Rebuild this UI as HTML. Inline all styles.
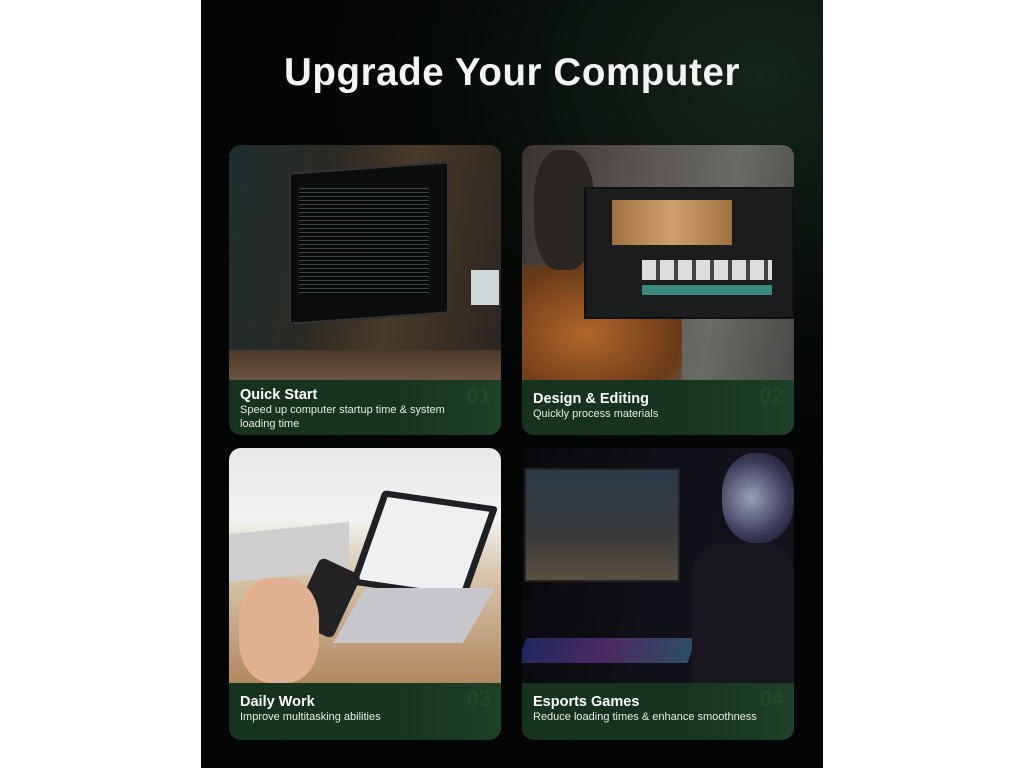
<!DOCTYPE html>
<html><head><meta charset="utf-8"><style>
body{margin:0;width:1024px;height:768px;background:#fff;position:relative;overflow:hidden;font-family:"Liberation Sans",sans-serif}
.panel{position:absolute;left:201px;top:0;width:622px;height:768px;background:radial-gradient(ellipse 500px 400px at 90% 10%,#14251a 0%,#070b08 60%,#030404 100%)}
h1{position:absolute;left:0;width:1024px;top:51px;margin:0;text-align:center;color:#f4f4f4;font-size:38.5px;font-weight:bold;letter-spacing:0.6px}
.card{position:absolute;width:272px;border-radius:12px;overflow:hidden;background:linear-gradient(90deg,#17321f,#163420 60%,#1e4127)}
.img{position:absolute;left:0;top:0;width:100%}
.t{position:absolute;left:11px;color:#fff;font-weight:bold;font-size:14.5px}
.s{position:absolute;left:11px;color:#e8ece8;font-size:11px;line-height:13.5px;width:240px}
.n{position:absolute;right:10px;color:#2a5032;font-size:22px;font-weight:bold;opacity:.55}
.abs{position:absolute}
</style></head><body>
<div class="panel"></div>
<h1>Upgrade Your Computer</h1>

<div class="card" style="left:229px;top:145px;height:290px">
 <div class="img" style="height:235px;background:linear-gradient(100deg,#1e2d2e 0%,#2b2a24 35%,#4a3a28 60%,#2a2420 100%)">
  <div class="abs" style="left:60px;top:22px;width:156px;height:148px;background:#0a0d0c;border:2px solid #333;transform:skewY(-4deg)"></div>
  <div class="abs" style="left:70px;top:40px;width:130px;height:110px;background:repeating-linear-gradient(#0a0d0c 0 3px,#5b6a5c 3px 4px);opacity:.6"></div>
  <div class="abs" style="left:0;top:205px;width:272px;height:30px;background:linear-gradient(#4a3a2a,#6a5440)"></div>
  <div class="abs" style="left:242px;top:125px;width:28px;height:35px;background:#cfd8d8"></div>
 </div>
 <div class="t" style="top:242px">Quick Start</div>
 <div class="s" style="top:259px">Speed up computer startup time &amp; system loading time</div>
 <div class="n" style="top:238px">01</div>
</div>

<div class="card" style="left:522px;top:145px;height:290px">
 <div class="img" style="height:235px;background:linear-gradient(100deg,#3a3430 0%,#5a5550 40%,#6a6a66 70%,#4a4a48 100%)">
  <div class="abs" style="left:0;top:120px;width:160px;height:115px;background:radial-gradient(ellipse at 40% 60%,#b0662a,#6a3a18 70%,transparent 100%)"></div>
  <div class="abs" style="left:12px;top:5px;width:60px;height:120px;border-radius:40%;background:#2a2622"></div>
  <div class="abs" style="left:62px;top:42px;width:206px;height:128px;background:#1a1c1e;border:2px solid #111"></div>
  <div class="abs" style="left:90px;top:55px;width:120px;height:45px;background:linear-gradient(90deg,#a07040,#d0a070,#a07040)"></div>
  <div class="abs" style="left:120px;top:115px;width:130px;height:20px;background:repeating-linear-gradient(90deg,#ddd 0 14px,#444 14px 18px)"></div>
  <div class="abs" style="left:120px;top:140px;width:130px;height:10px;background:#3a8a80"></div>
 </div>
 <div class="t" style="top:246px">Design &amp; Editing</div>
 <div class="s" style="top:263px">Quickly process materials</div>
 <div class="n" style="top:238px">02</div>
</div>

<div class="card" style="left:229px;top:448px;height:292px">
 <div class="img" style="height:235px;background:linear-gradient(180deg,#e8e8e6 0%,#f2f2f0 30%,#d6c3a8 55%,#b08860 100%)">
  <div class="abs" style="left:0;top:80px;width:120px;height:48px;background:#cfcfcf;transform:skewY(-6deg)"></div>
  <div class="abs" style="left:135px;top:50px;width:120px;height:95px;background:#1e2024;transform:skewX(-12deg) rotate(8deg);border-radius:4px"></div>
  <div class="abs" style="left:142px;top:56px;width:106px;height:83px;background:#eef0f2;transform:skewX(-12deg) rotate(8deg)"></div>
  <div class="abs" style="left:120px;top:140px;width:130px;height:55px;background:#c8c8cc;transform:skewX(-30deg)"></div>
  <div class="abs" style="left:75px;top:115px;width:45px;height:70px;background:#222;border-radius:6px;transform:rotate(25deg)"></div>
  <div class="abs" style="left:10px;top:130px;width:80px;height:105px;background:#e0b090;border-radius:40%"></div>
 </div>
 <div class="t" style="top:246px">Daily Work</div>
 <div class="s" style="top:263px">Improve multitasking abilities</div>
 <div class="n" style="top:238px">03</div>
</div>

<div class="card" style="left:522px;top:448px;height:292px">
 <div class="img" style="height:235px;background:linear-gradient(100deg,#08080c 0%,#101018 50%,#14121e 100%)">
  <div class="abs" style="left:2px;top:20px;width:152px;height:110px;background:linear-gradient(#2a3a48,#3a3a3a 60%,#5a5040);border:2px solid #222"></div>
  <div class="abs" style="left:0;top:190px;width:170px;height:25px;background:linear-gradient(90deg,#3040a0,#8040a0,#4080a0);opacity:.55;transform:skewX(-20deg)"></div>
  <div class="abs" style="left:200px;top:5px;width:72px;height:90px;border-radius:45%;background:radial-gradient(circle at 40% 50%,#9aa0b8,#3a3a5a 60%,#111 100%)"></div>
  <div class="abs" style="left:170px;top:95px;width:102px;height:140px;background:#16161c;border-radius:30px 30px 0 0"></div>
 </div>
 <div class="t" style="top:246px">Esports Games</div>
 <div class="s" style="top:263px">Reduce loading times &amp; enhance smoothness</div>
 <div class="n" style="top:238px">04</div>
</div>
</body></html>
